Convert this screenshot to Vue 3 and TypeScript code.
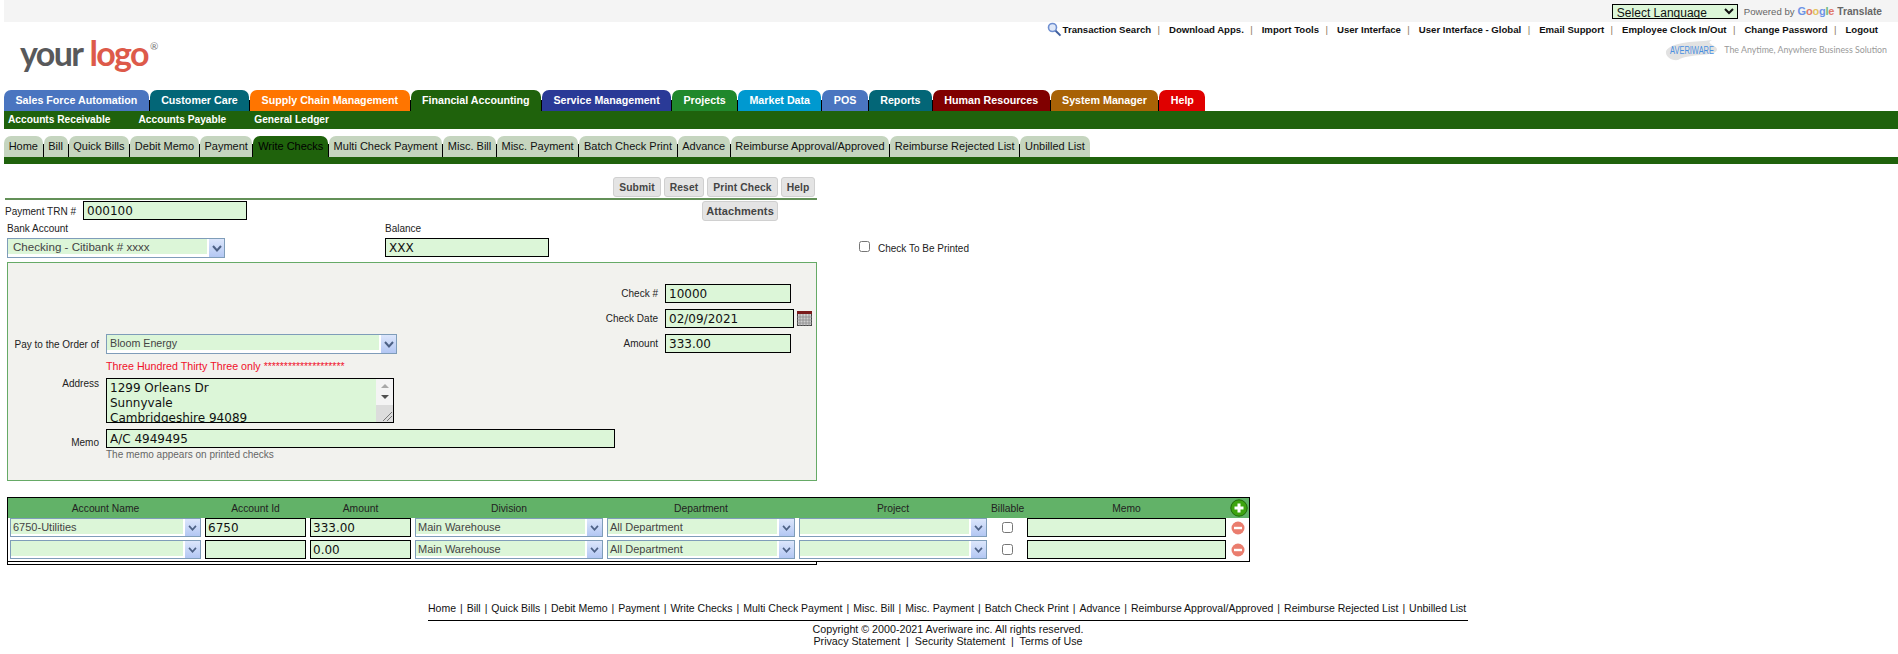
<script setup lang="ts">
const topLinks: string[] = ['Download Apps.', 'Import Tools', 'User Interface', 'User Interface - Global', 'Email Support', 'Employee Clock In/Out', 'Change Password', 'Logout']
const mainTabs: { label: string; color: string }[] = [
  { label: 'Sales Force Automation', color: '#4a75c0' },
  { label: 'Customer Care', color: '#036677' },
  { label: 'Supply Chain Management', color: '#ff7500' },
  { label: 'Financial Accounting', color: '#1f620c' },
  { label: 'Service Management', color: '#2a3a97' },
  { label: 'Projects', color: '#20882c' },
  { label: 'Market Data', color: '#0099d0' },
  { label: 'POS', color: '#4a75c0' },
  { label: 'Reports', color: '#036677' },
  { label: 'Human Resources', color: '#800000' },
  { label: 'System Manager', color: '#a86206' },
  { label: 'Help', color: '#e00000' },
]
const subLinks: string[] = ['Accounts Receivable', 'Accounts Payable', 'General Ledger']
const pageTabs: string[] = ['Home', 'Bill', 'Quick Bills', 'Debit Memo', 'Payment', 'Write Checks', 'Multi Check Payment', 'Misc. Bill', 'Misc. Payment', 'Batch Check Print', 'Advance', 'Reimburse Approval/Approved', 'Reimburse Rejected List', 'Unbilled List']
const headers: string[] = ['Account Name', 'Account Id', 'Amount', 'Division', 'Department', 'Project', 'Billable', 'Memo']
const rows: { account: string; id: string; amount: string }[] = [
  { account: '6750-Utilities', id: '6750', amount: '333.00' },
  { account: '', id: '', amount: '0.00' },
]
const addressLines: string[] = ['1299 Orleans Dr', 'Sunnyvale', 'Cambridgeshire 94089']
</script>

<template>
  <div class="page">
    <div class="langbar">
      <select class="lang"><option>Select Language</option></select>
      <span class="powered">Powered by</span>
      <span class="google"><i class="gb">G</i><i class="gr">o</i><i class="gy">o</i><i class="gb">g</i><i class="gg">l</i><i class="gr">e</i></span>
      <span class="translate">Translate</span>
    </div>

    <header class="header">
      <div class="logo"><span class="your">your</span><span class="logoword">logo</span><sup class="reg">®</sup></div>
      <div class="header-right">
        <nav class="toplinks">
          <svg class="search" width="15" height="15" viewBox="0 0 15 15">
            <circle cx="5.5" cy="5.5" r="4" fill="#dfe8f8" stroke="#6f8fd0" stroke-width="1.6" />
            <path d="M8.6 8.8 L13.5 13.6" stroke="#3f5f9f" stroke-width="2" />
          </svg>
          <a>Transaction Search</a>
          <template v-for="l in topLinks" :key="l"><span class="tsep">|</span><a>{{ l }}</a></template>
        </nav>
        <div class="brand">
          <svg width="56" height="22" viewBox="0 0 56 22">
            <path d="M2 12 C8 2 34 3 48 1 C40 5 54 6 53 11 C50 18 26 14 14 21 C8 22 1 18 2 12Z" fill="#e2e2e2" />
            <text x="6" y="15" font-family="Liberation Sans, sans-serif" font-size="10" textLength="44" lengthAdjust="spacingAndGlyphs" fill="#4a8fe0">AVERIWARE</text>
          </svg>
          <span class="tagline">The Anytime, Anywhere Business Solution</span>
        </div>
      </div>
    </header>

    <nav class="maintabs">
      <a v-for="t in mainTabs" :key="t.label" class="maintab" :style="{ background: t.color }">{{ t.label }}</a>
    </nav>
    <nav class="subband">
      <a v-for="s in subLinks" :key="s">{{ s }}</a>
    </nav>
    <nav class="pagetabs">
      <a v-for="t in pageTabs" :key="t" class="pagetab" :class="{ active: t === 'Write Checks' }">{{ t }}</a>
    </nav>
    <div class="band2"></div>

    <div class="content">
      <form class="form" @submit.prevent>
        <div class="actions">
          <button class="btn">Submit</button>
          <button class="btn">Reset</button>
          <button class="btn">Print Check</button>
          <button class="btn">Help</button>
        </div>
        <div class="trn-row">
          <label class="lbl trn-label">Payment TRN #</label>
          <input class="inp trn" value="000100" />
          <button class="btn attach">Attachments</button>
        </div>
        <div class="bank-row">
          <div class="bank">
            <label class="lbl stack">Bank Account</label>
            <div class="sel bank-sel"><span class="sel-text">Checking - Citibank # xxxx</span><span class="arrow"><svg width="10" height="7" viewBox="0 0 10 7"><path d="M1 1 L5 5.5 L9 1" fill="none" stroke="#4d6185" stroke-width="2" /></svg></span></div>
          </div>
          <div class="balance">
            <label class="lbl stack">Balance</label>
            <input class="inp bal" value="XXX" />
          </div>
        </div>

        <div class="panel">
          <div class="panel-top">
            <div class="panel-left">
              <div class="line">
                <label class="lbl side">Pay to the Order of</label>
                <div class="sel pay-sel"><span class="sel-text">Bloom Energy</span><span class="arrow"><svg width="10" height="7" viewBox="0 0 10 7"><path d="M1 1 L5 5.5 L9 1" fill="none" stroke="#4d6185" stroke-width="2" /></svg></span></div>
              </div>
              <div class="words">Three Hundred Thirty Three only <span class="stars">********************</span></div>
              <div class="line addr-line">
                <label class="lbl side addr-label">Address</label>
                <div class="ta">
                  <div class="ta-text" role="textbox"><div v-for="a in addressLines" :key="a">{{ a }}</div></div>
                  <div class="ta-bar">
                    <span class="up"></span><span class="down"></span>
                    <span class="grip"><svg width="12" height="12" viewBox="0 0 12 12"><path d="M2 11 L11 2 M6 11 L11 6" stroke="#777" stroke-width="1" /></svg></span>
                  </div>
                </div>
              </div>
            </div>
            <div class="panel-right">
              <div class="line"><label class="lbl rside">Check #</label><input class="inp chk" value="10000" /></div>
              <div class="line">
                <label class="lbl rside">Check Date</label><input class="inp date" value="02/09/2021" />
                <svg class="cal" width="15" height="15" viewBox="0 0 15 15">
                  <rect x="0.5" y="0.5" width="14" height="14" fill="#cfcfcf" stroke="#444" />
                  <rect x="0" y="0" width="15" height="3" fill="#7a1c1c" />
                  <path d="M0 6H15M0 9H15M0 12H15M3 3V15M6 3V15M9 3V15M12 3V15" stroke="#8a8a8a" stroke-width="0.8" />
                </svg>
              </div>
              <div class="line"><label class="lbl rside">Amount</label><input class="inp chk" value="333.00" /></div>
            </div>
          </div>
          <div class="line memo-line">
            <label class="lbl side memo-label">Memo</label>
            <input class="inp memo" value="A/C 4949495" />
          </div>
          <div class="hint">The memo appears on printed checks</div>
        </div>
      </form>
      <aside class="printed">
        <input type="checkbox" class="cb" />
        <span class="lbl">Check To Be Printed</span>
      </aside>
    </div>

    <section class="grid-table">
      <div class="cols head">
        <span v-for="h in headers" :key="h">{{ h }}</span>
        <svg class="round plus" width="18" height="18" viewBox="0 0 18 18">
          <circle cx="9" cy="9" r="8.2" fill="#3da40f" stroke="#1f6a08" stroke-width="1" />
          <path d="M9 4.5V13.5M4.5 9H13.5" stroke="#fff" stroke-width="3" />
        </svg>
      </div>
      <div class="body">
        <div v-for="(r, i) in rows" :key="i" class="cols row">
          <div class="sel cell-sel"><span class="sel-text">{{ r.account }}</span><span class="arrow"><svg width="9" height="6" viewBox="0 0 10 7"><path d="M1 1 L5 5.5 L9 1" fill="none" stroke="#4d6185" stroke-width="2" /></svg></span></div>
          <input class="inp cell" :value="r.id" />
          <input class="inp cell" :value="r.amount" />
          <div class="sel cell-sel"><span class="sel-text">Main Warehouse</span><span class="arrow"><svg width="9" height="6" viewBox="0 0 10 7"><path d="M1 1 L5 5.5 L9 1" fill="none" stroke="#4d6185" stroke-width="2" /></svg></span></div>
          <div class="sel cell-sel"><span class="sel-text">All Department</span><span class="arrow"><svg width="9" height="6" viewBox="0 0 10 7"><path d="M1 1 L5 5.5 L9 1" fill="none" stroke="#4d6185" stroke-width="2" /></svg></span></div>
          <div class="sel cell-sel"><span class="sel-text"></span><span class="arrow"><svg width="9" height="6" viewBox="0 0 10 7"><path d="M1 1 L5 5.5 L9 1" fill="none" stroke="#4d6185" stroke-width="2" /></svg></span></div>
          <div class="cbcell"><input type="checkbox" class="cb" /></div>
          <input class="inp cell" />
          <svg class="round" width="14" height="14" viewBox="0 0 14 14">
            <circle cx="7" cy="7" r="6.5" fill="#ea7d6e" />
            <path d="M3 7H11" stroke="#fff" stroke-width="2.4" />
          </svg>
        </div>
      </div>
    </section>
    <div class="under"></div>

    <footer class="footer">
      <div class="flinks">
        <template v-for="(t, i) in pageTabs" :key="t"><span v-if="i" class="fsep"> | </span><a>{{ t }}</a></template>
      </div>
      <div class="copy">Copyright © 2000-2021 Averiware inc. All rights reserved.</div>
      <div class="copy">Privacy Statement &nbsp;|&nbsp; Security Statement &nbsp;|&nbsp; Terms of Use</div>
    </footer>
  </div>
</template>

<style>
html, body { margin: 0; background: #fff; }
</style>

<style scoped>
.page {
  width: 1898px;
  height: 654px;
  box-sizing: border-box;
  padding-left: 4px;
  overflow: hidden;
  font-family: "Liberation Sans", Arial, sans-serif;
  color: #111;
}
a { cursor: pointer; }

/* language bar */
.langbar {
  height: 22px;
  background: #f4f4f4;
  display: flex;
  justify-content: flex-end;
  align-items: center;
  padding-right: 16px;
  font-size: 11px;
  color: #666;
}
.lang {
  width: 126px;
  height: 15px;
  box-sizing: border-box;
  border: 1px solid #000;
  background: #dcf6d8;
  font: 12px "Liberation Sans", Arial, sans-serif;
  padding: 0;
  margin-right: 6px;
  color: #111;
}
.powered { font-size: 9.6px; margin-right: 3px; }
.google { font-weight: bold; font-size: 11px; margin-right: 3px; letter-spacing: -0.2px; }
.google i { font-style: normal; }
.gb { color: #6d93e6; } .gr { color: #e0796b; } .gy { color: #e3c25d; } .gg { color: #6fb77a; }
.translate { font-weight: bold; font-size: 10.2px; color: #666; }

/* header */
.header { height: 68px; display: flex; justify-content: space-between; }
.logo { margin: 9px 0 0 16px; font-family: Lato, sans-serif; font-weight: 700; font-size: 34px; line-height: 44px; letter-spacing: -1.6px; height: 44px; }
.your { color: #58595b; margin-right: 7px; }
.logoword { color: #dd5a4a; }
.reg { font-size: 10px; font-weight: 400; color: #777; vertical-align: 16px; line-height: 0; letter-spacing: 0; margin-left: 2px; }
.header-right { display: flex; flex-direction: column; align-items: flex-end; padding-right: 11px; }
.toplinks { display: flex; align-items: center; height: 15px; font-size: 9.6px; font-weight: bold; color: #111; padding-right: 9px; }
.search { margin-right: 1px; }
.tsep { font-weight: normal; color: #8a7a5c; margin: 0 9px 0 6.4px; }
.brand { display: flex; align-items: center; margin-top: 1px; height: 23px; }
.tagline { font-family: Lato, sans-serif; font-size: 8.8px; line-height: 14px; color: #999; margin-left: 4px; }

/* main tabs */
.maintabs { display: flex; height: 21px; gap: 1px; }
.maintab {
  position: relative;
  padding: 0 11.4px;
  border-radius: 7px 7px 0 0;
  color: #fff;
  font-size: 10.7px;
  font-weight: bold;
  line-height: 21px;
}
.maintab::after {
  content: "";
  position: absolute;
  right: -1px;
  bottom: 0;
  width: 1px;
  height: 11px;
  background: #000;
}
.maintab:last-child::after { display: none; }
.subband {
  height: 18px;
  background: #1f620c;
  display: flex;
  gap: 28px;
  padding-left: 4px;
  color: #fff;
  font-size: 10.2px;
  font-weight: bold;
  line-height: 18px;
}

/* page tabs */
.pagetabs { display: flex; gap: 1px; height: 21px; margin-top: 7px; }
.pagetab {
  position: relative;
  padding: 0 4.65px;
  background: #c5d5bf;
  border-radius: 7px 7px 0 0;
  font-size: 11px;
  line-height: 21px;
  color: #111;
}
.pagetab.active { background: #1f620c; color: #000; }
.pagetab::after {
  content: "";
  position: absolute;
  right: -1px;
  bottom: 0;
  width: 1px;
  height: 13px;
  background: #000;
}
.pagetab:last-child::after { display: none; }
.band2 { height: 7px; background: #1f620c; }

/* form */
.content { display: flex; align-items: flex-start; margin-top: 13px; }
.form { width: 812px; margin-left: 1px; }
.actions {
  display: flex;
  justify-content: flex-end;
  gap: 3px;
  height: 21px;
  padding-right: 2px;
  border-bottom: 2px solid #639058;
}
.btn {
  height: 20px;
  box-sizing: border-box;
  padding: 0;
  border: 1px solid #d0d0d0;
  border-radius: 3px;
  background: #e4e4e4;
  color: #444;
  font: bold 10.3px "Liberation Sans", Arial, sans-serif;
  letter-spacing: 0.1px;
}
.actions .btn:nth-child(1) { width: 48px; }
.actions .btn:nth-child(2) { width: 40px; }
.actions .btn:nth-child(3) { width: 71px; }
.actions .btn:nth-child(4) { width: 34px; }
.trn-row { display: flex; align-items: flex-start; height: 22px; padding-top: 1px; box-sizing: border-box; }
.lbl { font-size: 10px; color: #222; white-space: nowrap; }
.trn-label { width: 78px; line-height: 21px; }
.inp {
  box-sizing: border-box;
  height: 19px;
  border: 1px solid #000;
  background: #dcf6d8;
  font: 12px "DejaVu Sans", Verdana, sans-serif;
  color: #111;
  padding: 0 3px;
  outline: none;
  border-radius: 0;
}
.trn { width: 164px; }
.attach { width: 76px; margin-left: 455px; font-size: 11px; }
.bank-row { display: grid; grid-template-columns: 378px 164px; padding-left: 2px; }
.stack { display: block; height: 16px; line-height: 14px; }
.bal { width: 164px; display: block; }

.sel {
  box-sizing: border-box;
  display: flex;
  background: #fff;
  border: 1px solid #7f9db9;
  height: 20px;
  font-size: 11px;
  color: #444;
}
.sel-text {
  flex: 1;
  background: #dcf6d8;
  height: 15px;
  line-height: 16px;
  white-space: nowrap;
  overflow: hidden;
}
.arrow {
  width: 15px;
  margin: 0 0 0 2px;
  background: linear-gradient(#dce6fb, #b3c7f3);
  display: flex;
  align-items: center;
  justify-content: center;
}
.bank-sel { width: 218px; }
.bank-sel .sel-text { padding-left: 5px; font-size: 11.6px; }
.pay-sel { width: 291px; }
.pay-sel .sel-text { padding-left: 3px; font-size: 10.7px; }

.panel {
  box-sizing: border-box;
  width: 810px;
  height: 219px;
  margin: 4px 0 0 2px;
  border: 1px solid #66aa66;
  background: #f2f2ee;
}
.panel-top { display: flex; }
.panel-left { width: 592px; padding-top: 71px; }
.panel-right { padding-top: 21px; display: flex; flex-direction: column; gap: 6px; }
.line { display: flex; align-items: center; }
.side { width: 91px; margin-right: 7px; text-align: right; }
.rside { width: 58px; margin-right: 7px; text-align: right; }
.chk { width: 126px; }
.date { width: 129px; }
.cal { margin-left: 3px; }
.words { margin: 6px 0 0 98px; height: 12px; line-height: 12px; font-size: 10.7px; color: #f0102a; }
.stars { font-size: 10.4px; }
.addr-line { align-items: flex-start; margin-top: 6px; }
.addr-label { line-height: 10px; padding-top: 1px; }
.ta {
  box-sizing: border-box;
  display: flex;
  width: 288px;
  height: 45px;
  border: 1px solid #000;
  background: #dcf6d8;
}
.ta-text {
  flex: 1;
  min-width: 0;
  overflow: hidden;
  padding: 2px 3px 0;
  font: 12px/15px "DejaVu Sans", Verdana, sans-serif;
  color: #111;
}
.ta-bar { width: 17px; display: flex; flex-direction: column; align-items: center; background: #f4f4f4; }
.up, .down { width: 0; height: 0; border-left: 4px solid transparent; border-right: 4px solid transparent; }
.up { border-bottom: 4px solid #a8a8a8; margin-top: 5px; }
.down { border-top: 4px solid #505050; margin-top: 7px; }
.grip { margin-top: auto; width: 17px; height: 17px; background: #dcdcdc; display: flex; align-items: flex-end; justify-content: flex-end; }
.memo-line { margin-top: 6px; }
.memo { width: 509px; }
.memo-label { padding-top: 8px; }
.hint { margin: 1px 0 0 98px; font-size: 10px; line-height: 11px; color: #666; }

.printed { display: flex; align-items: flex-start; margin: 64px 0 0 42px; }
.printed .lbl { margin-left: 8px; padding-top: 2px; line-height: 12px; display: block; }
.cb { width: 11px; height: 11px; margin: 0; }

/* line items */
.grid-table {
  box-sizing: border-box;
  width: 1243px;
  margin: 16px 0 0 3px;
  border: 1px solid #000;
}
.cols {
  display: grid;
  grid-template-columns: 191px 101px 101px 188px 188px 188px 32px 199px 16px;
  column-gap: 4px;
  padding-left: 2px;
  align-items: center;
}
.head { background: #62b268; height: 20px; font-size: 10.3px; color: #222; text-align: center; }
.head .round { justify-self: center; }
.head .plus { margin-left: 1px; }
.body { padding: 0 0 2px; display: flex; flex-direction: column; gap: 3px; }
.row { height: 19px; }
.cell { width: 100%; height: 19px; padding: 0 2px; }
.cell-sel { height: 19px; }
.cell-sel .sel-text { padding-left: 2px; height: 15px; font-size: 11px; }
.cbcell { display: flex; justify-content: center; }
.row .round { justify-self: center; }
.under {
  box-sizing: border-box;
  width: 810px;
  height: 3px;
  margin-left: 3px;
  border: 1px solid #000;
  border-top: 0;
}

/* footer */
.footer { width: 1040px; margin: 36px 0 0 424px; text-align: center; }
.flinks {
  font-size: 10.5px;
  line-height: 14px;
  padding-bottom: 5px;
  border-bottom: 1px solid #000;
  white-space: nowrap;
  color: #111;
  text-align: left;
}
.fsep { margin: 0 1.05px; }
.copy { font-size: 10.7px; line-height: 12px; }
.flinks + .copy { margin-top: 2px; }
</style>
